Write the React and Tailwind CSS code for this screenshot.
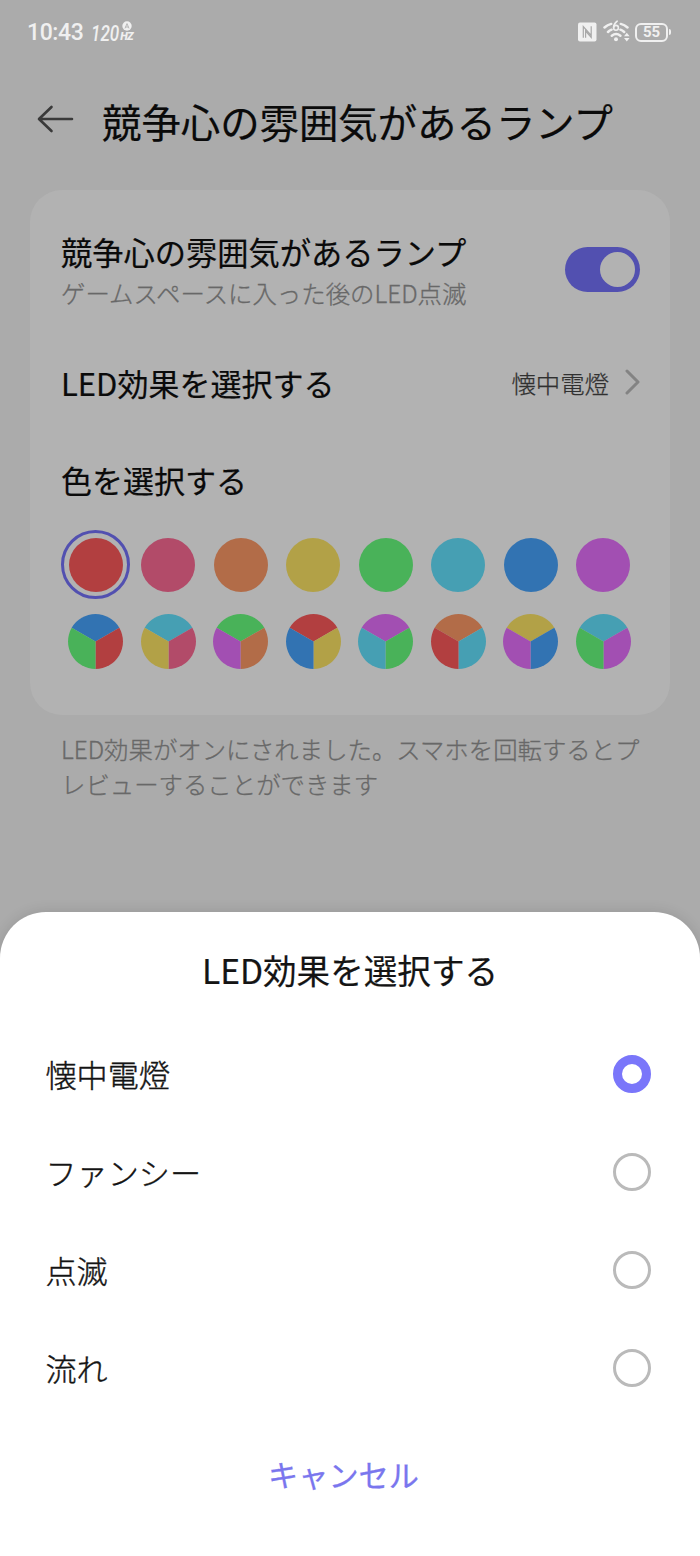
import React, { useState } from 'react';

const RED = '#b23f40';
const PINK = '#b24b69';
const ORANGE = '#b26c48';
const YELLOW = '#b2a147';
const GREEN = '#49b259';
const CYAN = '#469fb3';
const BLUE = '#3273b2';
const PURPLE = '#a24fb2';

const solidColors = [RED, PINK, ORANGE, YELLOW, GREEN, CYAN, BLUE, PURPLE];

// [top, right, left]
const mixedColors = [
  [BLUE, RED, GREEN],
  [CYAN, PINK, YELLOW],
  [GREEN, ORANGE, PURPLE],
  [RED, YELLOW, BLUE],
  [PURPLE, GREEN, CYAN],
  [ORANGE, CYAN, RED],
  [YELLOW, BLUE, PURPLE],
  [CYAN, PURPLE, GREEN],
];

const effects = ['懐中電燈', 'ファンシー', '点滅', '流れ'];

function StatusBar() {
  return (
    <div className="flex h-16 items-center justify-between pl-[27px] pr-[29px] text-[#f0f0f0]">
      <div className="flex items-center">
        <span className="w-[56px] whitespace-nowrap font-[Roboto] text-[23px] font-medium leading-none tracking-[-0.4px]">10:43</span>
        <div className="ml-2 flex h-[26px] items-start font-[Roboto] italic">
          <span className="mt-[2px] w-[28px] shrink-0 origin-left scale-x-[0.76] text-[22.5px] font-medium leading-[24px]">120</span>
          <div className="mt-[2px] flex w-[14px] flex-col items-end">
            <svg className="mr-[1px] shrink-0" width="10" height="10" viewBox="0 0 10 10">
              <circle cx="5" cy="5" r="4.7" fill="currentColor" />
              <path d="M3 7.4 5 2.6l2 4.8M3.7 6h2.6" fill="none" stroke="#b0b0b0" strokeWidth="0.9" />
            </svg>
            <span className="text-[11px] font-black leading-[11px] tracking-[-0.6px]">HZ</span>
          </div>
        </div>
      </div>
      <div className="flex items-center">
        <svg width="19" height="20" viewBox="0 0 19 20">
          <rect x="0" y="0.5" width="18.5" height="19" rx="2" fill="currentColor" />
          <path d="M5.3 15.8V4.5l7.5 8.5M7.6 15.8V9.2l5.6 6.3V4.2" fill="none" stroke="#a8a8a8" strokeWidth="1.2" />
        </svg>
        <svg className="ml-[6px]" width="28" height="24" viewBox="0 0 28 24" fill="none" stroke="currentColor" strokeLinecap="round">
          <path d="M1.5 7.5Q4.5 4.8 8.2 3.9M17.8 3.9q3.7.9 6.7 3.6M5 12q1.7-1.6 3.6-2.3M17.4 9.7q1.9.7 3.8 2.3M8.8 15.8q4.3-3.5 8.6 0" strokeWidth="2.5" />
          <path d="M14.2 1.2q-3.6 2.7-3.6 6.4" strokeWidth="1.6" />
          <circle cx="13" cy="7.8" r="2.4" strokeWidth="1.6" />
          <circle cx="13" cy="19.2" r="2" fill="currentColor" stroke="none" />
          <path d="m21 16.2 2.8-3.5 2.8 3.5zM21 18l2.8 3.5 2.8-3.5z" fill="currentColor" stroke="none" />
        </svg>
        <div className="ml-[4px] flex h-[19px] w-[33px] items-center justify-center rounded-[6px] border-2 border-current font-[Roboto] text-[15px] font-bold leading-none">
          55
        </div>
        <div className="ml-px h-[6px] w-[2px] rounded-r bg-current" />
      </div>
    </div>
  );
}

function Header() {
  return (
    <header className="flex h-[126px] items-start pl-[37px]">
      <svg className="mt-[40px] shrink-0" width="37" height="30" viewBox="0 0 37 30" fill="none" stroke="#3a3a3a" strokeWidth="2.6" strokeLinecap="round" strokeLinejoin="round">
        <path d="M35 15H2.5M14.5 3 2 15l12.5 12" />
      </svg>
      <h1 className="ml-[28px] mt-[28px] whitespace-nowrap text-[39.4px] leading-[58px] text-[#0a0a0a] [-webkit-text-stroke:0.2px_#0a0a0a]">
        競争心の雰囲気があるランプ
      </h1>
    </header>
  );
}

function Toggle() {
  return (
    <div className="flex h-[45px] w-[75px] items-center justify-end rounded-full bg-[#5250b0] pr-[5px]">
      <div className="size-[35px] rounded-full bg-[#b2b2b2]" />
    </div>
  );
}

function MixedSwatch({ colors }) {
  const [top, right, left] = colors;
  return (
    <svg width="55" height="55" viewBox="-27.5 -27.5 55 55">
      <path d="M0 0-23.8-13.75A27.5 27.5 0 0 1 23.8-13.75Z" fill={top} />
      <path d="M0 0 23.8-13.75A27.5 27.5 0 0 1 0 27.5Z" fill={right} />
      <path d="M0 0V27.5A27.5 27.5 0 0 1-23.8-13.75Z" fill={left} />
    </svg>
  );
}

function ColorPicker() {
  const [selected, setSelected] = useState(0);
  return (
    <div className="w-[580.5px]">
      <div className="grid h-[69px] grid-cols-8">
        {solidColors.map((color, i) => (
          <button
            key={color}
            onClick={() => setSelected(i)}
            className={`flex size-[69px] items-center justify-center rounded-full border-[3px] ${i === selected ? 'border-[#5250b0]' : 'border-transparent'}`}
          >
            <span className="size-[54px] shrink-0 rounded-full" style={{ backgroundColor: color }} />
          </button>
        ))}
      </div>
      <div className="mt-[15px] grid grid-cols-8">
        {mixedColors.map((colors) => (
          <div key={colors.join()} className="flex w-[69px] justify-center">
            <MixedSwatch colors={colors} />
          </div>
        ))}
      </div>
    </div>
  );
}

function SettingsCard() {
  return (
    <section className="mx-[30px] h-[525px] rounded-[32px] bg-[#b2b2b2] px-[31px] pt-[38px] text-[#0a0a0a]">
      <div className="flex items-start justify-between">
        <div className="whitespace-nowrap">
          <h2 className="text-[31.25px] leading-[48px] [-webkit-text-stroke:0.2px_#0a0a0a]">競争心の雰囲気があるランプ</h2>
          <p className="mt-[-1px] text-[24.4px] font-light leading-[35px] text-[#686868] [-webkit-text-stroke:0.3px_#686868]">ゲームスペースに入った後のLED点滅</p>
        </div>
        <div className="mr-[-1px] mt-[19px]">
          <Toggle />
        </div>
      </div>
      <div className="mt-[49px] flex h-[48px] items-center justify-between">
        <h2 className="text-[31px] leading-[48px] [-webkit-text-stroke:0.2px_#0a0a0a]">LED効果を選択する</h2>
        <div className="flex items-center">
          <span className="mt-[-1px] text-[24.4px] font-light leading-[36px] text-[#303030] [-webkit-text-stroke:0.25px_#303030]">懐中電燈</span>
          <svg className="ml-[15px] mr-[-2px] mt-[-3px]" width="17" height="26" viewBox="0 0 17 26" fill="none" stroke="#838383" strokeWidth="3" strokeLinecap="round" strokeLinejoin="round">
            <path d="m3 2 11 11L3 24" />
          </svg>
        </div>
      </div>
      <h2 className="mt-[49px] text-[31px] leading-[48px] [-webkit-text-stroke:0.2px_#0a0a0a]">色を選択する</h2>
      <div className="mt-[26px]">
        <ColorPicker />
      </div>
    </section>
  );
}

function Radio({ checked }) {
  return (
    <span className={`size-[38px] rounded-full bg-white ${checked ? 'border-[9px] border-[#7a76fa]' : 'border-[3px] border-[#bababa]'}`} />
  );
}

function EffectSheet() {
  const [effect, setEffect] = useState(effects[0]);
  return (
    <section className="h-[644px] rounded-t-[46px] bg-white pt-[33px] text-[#141414] shadow-[0_0_14px_rgba(0,0,0,0.12)]">
      <h2 className="text-center text-[33.6px] leading-[50px] [-webkit-text-stroke:0.2px_#141414]">LED効果を選択する</h2>
      <div className="mt-[30px]">
        {effects.map((name) => (
          <button key={name} onClick={() => setEffect(name)} className="flex h-[98px] w-full items-center justify-between pl-[45.5px] pr-[49px]">
            <span className="text-[31.1px] font-light leading-[48px] [-webkit-text-stroke:0.4px_#141414]">{name}</span>
            <Radio checked={name === effect} />
          </button>
        ))}
      </div>
      <button className="mt-[33px] block w-full pr-[13px] text-center text-[30.2px] leading-[48px] text-[#7a76ee] [-webkit-text-stroke:0.3px_#7a76ee]">
        キャンセル
      </button>
    </section>
  );
}

export default function App() {
  return (
    <div className="flex h-[1556px] w-[700px] flex-col overflow-hidden bg-[#ababab] font-['Noto_Sans_CJK_JP',sans-serif]">
      <StatusBar />
      <Header />
      <SettingsCard />
      <p className="ml-[61px] mt-[16px] h-[181px] w-[590px] text-[24.4px] font-light leading-[35px] text-[#686868] [-webkit-text-stroke:0.3px_#686868]">
        LED効果がオンにされました。スマホを回転するとプ
        <br />
        レビューすることができます
      </p>
      <EffectSheet />
    </div>
  );
}
